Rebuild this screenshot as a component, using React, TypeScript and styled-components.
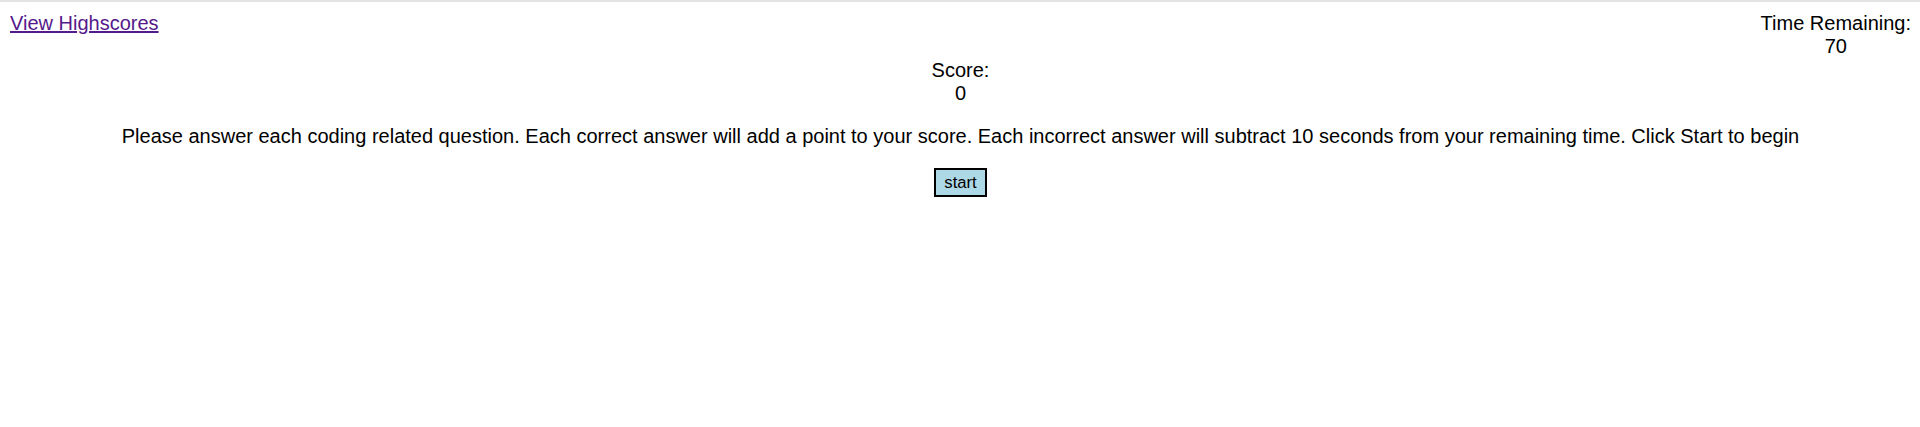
import React, { useState } from 'react';
import styled, { createGlobalStyle } from 'styled-components';

const GlobalStyle = createGlobalStyle`
  html, body {
    margin: 0;
    padding: 0;
    background: #ffffff;
  }
  body {
    font-family: "Liberation Sans", Arial, sans-serif;
    font-size: 20px;
    color: #000000;
  }
`;

export default function App() {
  const [score] = useState(0);
  const [timeLeft] = useState(70);

  return (
    <>
      <GlobalStyle />
      <SPage>
        <SHeader>
          <SHighscoreLink href="#highscores">View Highscores</SHighscoreLink>
          <STimer>
            <div>Time Remaining:</div>
            <div>{timeLeft}</div>
          </STimer>
        </SHeader>

        <SScore>
          <div>Score:</div>
          <div>{score}</div>
        </SScore>

        <SIntro>
          Please answer each coding related question. Each correct answer will add a point to your score. Each incorrect answer will subtract 10 seconds from your remaining time. Click Start to begin
        </SIntro>

        <SStartRow>
          <SStartButton type="button">start</SStartButton>
        </SStartRow>
      </SPage>
    </>
  );
}

const SPage = styled.div`
  border-top: 2px solid #e3e3e3;
  padding: 10px 9px 10px 10px;
  min-height: 400px;
`;

const SHeader = styled.div`
  display: flex;
  justify-content: space-between;
  align-items: flex-start;
  line-height: 23px;
`;

const SHighscoreLink = styled.a`
  color: #551a8b;
  text-decoration: underline;
`;

const STimer = styled.div`
  text-align: center;
`;

const SScore = styled.div`
  text-align: center;
  line-height: 23px;
  margin-top: 1px;
`;

const SIntro = styled.p`
  margin: 20px 0;
  text-align: center;
  line-height: 23px;
`;

const SStartRow = styled.div`
  display: flex;
  justify-content: center;
`;

const SStartButton = styled.button`
  font-family: "Liberation Sans", Arial, sans-serif;
  font-size: 16.67px;
  line-height: 19px;
  padding: 3px 8px;
  background: #add8e6;
  border: 2px solid #000000;
  color: #000000;
  cursor: pointer;
`;
